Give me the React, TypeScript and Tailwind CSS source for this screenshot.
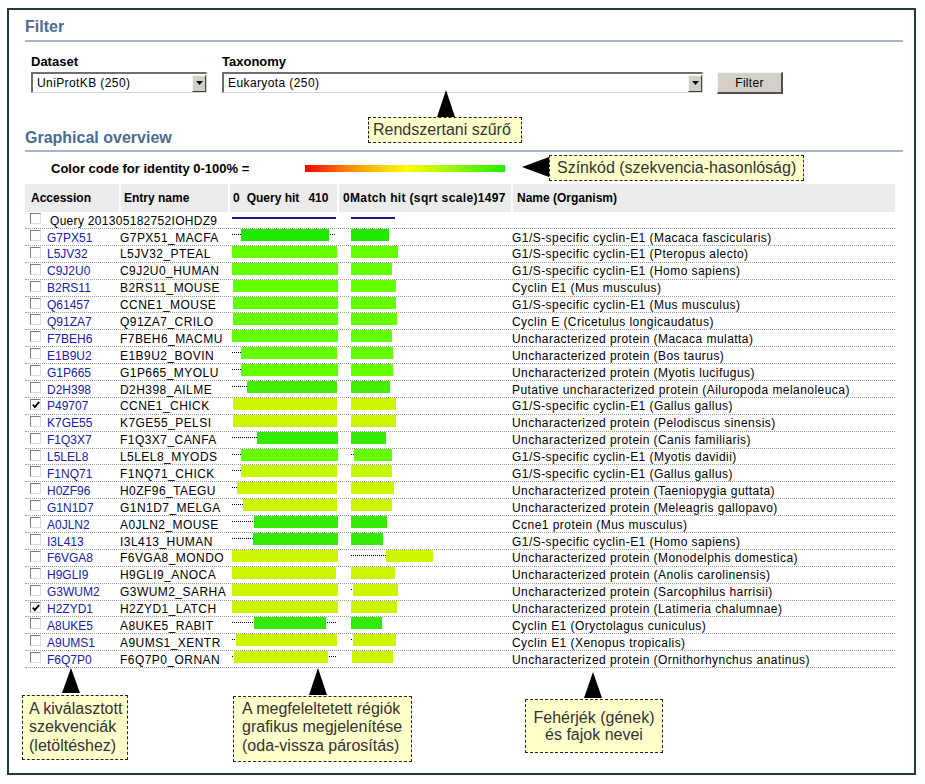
import React from 'react';

type Row = {
  acc: string;
  entry: string;
  name: string;
  q: number[]; // [barStart, barEnd, trailEnd?] in page px
  m: number[]; // [barStart, barEnd]
  color: string;
  checked?: boolean;
};

const GR = '#22e800';
const GR2 = '#33ea00';
const LI = '#66ff00';
const YE = '#ccf600';

const rows: Row[] = [
  { acc: 'G7PX51', entry: 'G7PX51_MACFA', name: 'G1/S-specific cyclin-E1 (Macaca fascicularis)', q: [241, 329, 336], m: [351, 389], color: GR },
  { acc: 'L5JV32', entry: 'L5JV32_PTEAL', name: 'G1/S-specific cyclin-E1 (Pteropus alecto)', q: [232, 337], m: [351, 398], color: LI },
  { acc: 'C9J2U0', entry: 'C9J2U0_HUMAN', name: 'G1/S-specific cyclin-E1 (Homo sapiens)', q: [232, 338], m: [351, 392], color: LI },
  { acc: 'B2RS11', entry: 'B2RS11_MOUSE', name: 'Cyclin E1 (Mus musculus)', q: [233, 338], m: [351, 396], color: LI },
  { acc: 'Q61457', entry: 'CCNE1_MOUSE', name: 'G1/S-specific cyclin-E1 (Mus musculus)', q: [233, 338], m: [351, 396], color: LI },
  { acc: 'Q91ZA7', entry: 'Q91ZA7_CRILO', name: 'Cyclin E (Cricetulus longicaudatus)', q: [233, 338], m: [351, 397], color: LI },
  { acc: 'F7BEH6', entry: 'F7BEH6_MACMU', name: 'Uncharacterized protein (Macaca mulatta)', q: [232, 338], m: [351, 392], color: LI },
  { acc: 'E1B9U2', entry: 'E1B9U2_BOVIN', name: 'Uncharacterized protein (Bos taurus)', q: [241, 337], m: [351, 393], color: LI },
  { acc: 'G1P665', entry: 'G1P665_MYOLU', name: 'Uncharacterized protein (Myotis lucifugus)', q: [241, 338], m: [351, 393], color: LI },
  { acc: 'D2H398', entry: 'D2H398_AILME', name: 'Putative uncharacterized protein (Ailuropoda melanoleuca)', q: [247, 337], m: [351, 390], color: '#44ec00' },
  { acc: 'P49707', entry: 'CCNE1_CHICK', name: 'G1/S-specific cyclin-E1 (Gallus gallus)', q: [233, 337], m: [351, 396], color: YE, checked: true },
  { acc: 'K7GE55', entry: 'K7GE55_PELSI', name: 'Uncharacterized protein (Pelodiscus sinensis)', q: [233, 337], m: [351, 396], color: YE },
  { acc: 'F1Q3X7', entry: 'F1Q3X7_CANFA', name: 'Uncharacterized protein (Canis familiaris)', q: [257, 338], m: [351, 386], color: GR2 },
  { acc: 'L5LEL8', entry: 'L5LEL8_MYODS', name: 'G1/S-specific cyclin-E1 (Myotis davidii)', q: [241, 338], m: [354, 392], color: LI },
  { acc: 'F1NQ71', entry: 'F1NQ71_CHICK', name: 'G1/S-specific cyclin-E1 (Gallus gallus)', q: [241, 337], m: [351, 392], color: '#c4f800' },
  { acc: 'H0ZF96', entry: 'H0ZF96_TAEGU', name: 'Uncharacterized protein (Taeniopygia guttata)', q: [237, 337], m: [351, 394], color: YE },
  { acc: 'G1N1D7', entry: 'G1N1D7_MELGA', name: 'Uncharacterized protein (Meleagris gallopavo)', q: [243, 337], m: [351, 392], color: YE },
  { acc: 'A0JLN2', entry: 'A0JLN2_MOUSE', name: 'Ccne1 protein (Mus musculus)', q: [254, 338], m: [351, 387], color: GR2 },
  { acc: 'I3L413', entry: 'I3L413_HUMAN', name: 'G1/S-specific cyclin-E1 (Homo sapiens)', q: [253, 338], m: [351, 383], color: GR2 },
  { acc: 'F6VGA8', entry: 'F6VGA8_MONDO', name: 'Uncharacterized protein (Monodelphis domestica)', q: [232, 338], m: [386, 433], color: YE },
  { acc: 'H9GLI9', entry: 'H9GLI9_ANOCA', name: 'Uncharacterized protein (Anolis carolinensis)', q: [232, 336], m: [351, 395], color: YE },
  { acc: 'G3WUM2', entry: 'G3WUM2_SARHA', name: 'Uncharacterized protein (Sarcophilus harrisii)', q: [232, 338], m: [353, 398], color: YE },
  { acc: 'H2ZYD1', entry: 'H2ZYD1_LATCH', name: 'Uncharacterized protein (Latimeria chalumnae)', q: [232, 338], m: [351, 397], color: YE, checked: true },
  { acc: 'A8UKE5', entry: 'A8UKE5_RABIT', name: 'Cyclin E1 (Oryctolagus cuniculus)', q: [254, 326, 336], m: [351, 382], color: GR2 },
  { acc: 'A9UMS1', entry: 'A9UMS1_XENTR', name: 'Cyclin E1 (Xenopus tropicalis)', q: [236, 337], m: [353, 396], color: YE },
  { acc: 'F6Q7P0', entry: 'F6Q7P0_ORNAN', name: 'Uncharacterized protein (Ornithorhynchus anatinus)', q: [234, 328, 336], m: [352, 393], color: YE },
];

// columns of the body grid start at page x: 25, 120, 230, 339, 512
const Q0 = 230;
const M0 = 339;

function CheckBox({ checked }: { checked?: boolean }) {
  return (
    <span className="relative mt-[1px] inline-block h-[11px] w-[11px] shrink-0 border border-t-[#7c7c7c] border-l-[#7c7c7c] border-r-[#dcdcdc] border-b-[#dcdcdc] bg-white">
      {checked && (
        <svg className="absolute left-[1px] top-[1px]" width="8" height="8" viewBox="0 0 8 8">
          <path d="M0.8 3.6 L2.8 6 L7.2 0.8" fill="none" stroke="#000" strokeWidth="1.8" />
        </svg>
      )}
    </span>
  );
}

function Dots({ x1, x2, y = 5.5 }: { x1: number; x2: number; y?: number }) {
  if (x2 - x1 < 1) return null;
  return <line x1={x1} x2={x2} y1={y} y2={y} stroke="#000" strokeWidth="1" strokeDasharray="1 1" />;
}

function QueryBar({ q, color }: { q: number[]; color: string }) {
  const [s, e, t] = q;
  return (
    <svg width="109" height="14" className="block">
      {s > 233 && <Dots x1={232 - Q0} x2={s - Q0} />}
      <rect x={s - Q0} y={0} width={e - s} height={12} fill={color} />
      {t && <Dots x1={e - Q0 + 1} x2={t - Q0} />}
    </svg>
  );
}

function MatchBar({ m, color }: { m: number[]; color: string }) {
  const [s, e] = m;
  return (
    <svg width="173" height="14" className="block">
      {s > 352 && <Dots x1={351 - M0} x2={s - M0} />}
      <rect x={s - M0} y={0} width={e - s} height={12} fill={color} />
    </svg>
  );
}

function Select({ text }: { text: string }) {
  return (
    <div className="mt-[3px] flex h-[21px] items-center border-t-2 border-l-2 border-r border-b border-t-[#6f6f6f] border-l-[#6f6f6f] border-r-[#d6d6d6] border-b-[#d6d6d6] bg-white">
      <span className="flex-1 pl-[4px] text-[12px] leading-[14px] tracking-[0.4px]">{text}</span>
      <span className="flex h-[17px] w-[14px] items-center justify-center border border-t-[#f4f4f4] border-l-[#f4f4f4] border-r-[#404040] border-b-[#404040] bg-[#d4d0c8]">
        <svg width="7" height="4" viewBox="0 0 7 4">
          <polygon points="0,0 7,0 3.5,4" fill="#000" />
        </svg>
      </span>
    </div>
  );
}

export default function App() {
  return (
    <div className="min-h-[784px] bg-white pl-[7px] pt-[8px] font-['Liberation_Sans',Arial,sans-serif] text-black">
      <div className="relative h-[767px] w-[909px] border-2 border-[#203c3c] pl-[16px] pr-[11px] pt-[7px]">
        {/* Filter section */}
        <h2 className="border-b-2 border-[#a7b6c6] pb-[4px] text-[16px] font-bold leading-[19px] text-[#4b6b95]">Filter</h2>

        <div className="ml-[6px] mt-[12px] flex items-start">
          <div className="w-[176px]">
            <div className="text-[13px] font-bold leading-[15px]">Dataset</div>
            <Select text="UniProtKB (250)" />
          </div>
          <div className="ml-[15px] w-[481px]">
            <div className="text-[13px] font-bold leading-[15px]">Taxonomy</div>
            <Select text="Eukaryota (250)" />
          </div>
          <button className="ml-[14px] mt-[18px] h-[22px] w-[66px] border border-t-[#f4f4f4] border-l-[#f4f4f4] border-r-2 border-b-2 border-r-[#505050] border-b-[#505050] bg-[#d4d0c8] text-[12px] leading-[14px] tracking-[0.3px]">
            Filter
          </button>
        </div>

        {/* Graphical overview */}
        <h2 className="mt-[34px] border-b-2 border-[#a7b6c6] pb-[3px] text-[16px] font-bold leading-[19px] text-[#4b6b95]">
          Graphical overview
        </h2>

        <div className="mt-[6px] flex h-[20px] items-center">
          <span className="ml-[26px] w-[254px] whitespace-nowrap text-[13px] font-bold leading-[15px]">Color code for identity 0-100% =</span>
          <span className="h-[7px] w-[200px] bg-[linear-gradient(to_right,#ff0000,#ff9900_25%,#ffff00_51%,#22ee00)]" />
        </div>

        {/* Table */}
        <div className="mt-[6px] w-[870px]">
          <div className="grid h-[28px] grid-cols-[94px_107px_107px_172px_382px] gap-x-[2px] bg-white text-[12px] font-bold leading-[14px]">
            <div className="flex items-center bg-[#ececec] pl-[6px]">Accession</div>
            <div className="flex items-center bg-[#ececec] pl-[3px]">Entry name</div>
            <div className="flex items-center whitespace-nowrap bg-[#ececec] pl-[3px]">
              <span>0</span>
              <span className="ml-[7px]">Query hit</span>
              <span className="ml-[9px]">410</span>
            </div>
            <div className="flex items-center whitespace-nowrap bg-[#ececec] pl-[4px] tracking-[0.35px]">0Match hit (sqrt scale)1497</div>
            <div className="flex items-center bg-[#ececec] pl-[4px]">Name (Organism)</div>
          </div>

          {/* query row */}
          <div className="grid h-[17px] grid-cols-[95px_110px_109px_173px_383px] border-b border-dotted border-[#9c9c9c] text-[12px] leading-[14px]">
            <div className="col-span-2 flex items-start pl-[5px]">
              <CheckBox />
              <span className="ml-[9px] mt-[1.5px] whitespace-nowrap tracking-[0.3px]">Query 201305182752IOHDZ9</span>
            </div>
            <div>
              <svg width="109" height="14" className="block">
                <rect x={232 - Q0} y={5} width={104} height={2} fill="#1a1a8c" />
              </svg>
            </div>
            <div>
              <svg width="173" height="14" className="block">
                <rect x={351 - M0} y={5} width={44} height={2} fill="#1a1a8c" />
              </svg>
            </div>
            <div />
          </div>

          {rows.map((r) => (
            <div
              key={r.acc}
              className="grid h-[16.9px] grid-cols-[95px_110px_109px_173px_383px] border-b border-dotted border-[#9c9c9c] text-[12px] leading-[14px]"
            >
              <div className="flex items-start pl-[5px]">
                <CheckBox checked={r.checked} />
                <a className="ml-[6px] mt-[1.5px] text-[#2020a6]">{r.acc}</a>
              </div>
              <div className="whitespace-nowrap pt-[1.5px] tracking-[0.45px]">{r.entry}</div>
              <div>
                <QueryBar q={r.q} color={r.color} />
              </div>
              <div>
                <MatchBar m={r.m} color={r.color} />
              </div>
              <div className="whitespace-nowrap pt-[1.5px] tracking-[0.45px]">{r.name}</div>
            </div>
          ))}
        </div>

        {/* annotation callouts below the table */}
        <div className="flex items-start text-[16px] text-[#333333]">
          <div className="ml-[-3px] w-[106px]">
            <svg className="ml-[40px] block" width="18" height="25" viewBox="0 0 18 25">
              <polygon points="9,0 18,25 0,25" fill="#000" />
            </svg>
            <div className="mt-[2px] h-[65px] border border-dashed border-[#222] bg-[#ffffcc] pl-[6px] pt-[4px] leading-[18.3px]">
              A kiválasztott
              <br />
              szekvenciák
              <br />
              (letöltéshez)
            </div>
          </div>
          <div className="ml-[105px] w-[179px]">
            <svg className="ml-[76px] block" width="18" height="27" viewBox="0 0 18 27">
              <polygon points="9,0 18,27 0,27" fill="#000" />
            </svg>
            <div className="mt-[1px] h-[66px] border border-dashed border-[#222] bg-[#ffffcc] pl-[8px] pt-[3px] leading-[18.3px]">
              A megfeleltetett régiók
              <br />
              grafikus megjelenítése
              <br />
              (oda-vissza párosítás)
            </div>
          </div>
          <div className="ml-[113px] mt-[4px] w-[138px]">
            <svg className="ml-[59px] block" width="18" height="26" viewBox="0 0 18 26">
              <polygon points="9,0 18,26 0,26" fill="#000" />
            </svg>
            <div className="mt-[1px] h-[54px] border border-dashed border-[#222] bg-[#ffffcc] pt-[9px] text-center leading-[17px]">
              Fehérjék (gének)
              <br />
              és fajok nevei
            </div>
          </div>
        </div>

        {/* annotation callouts laid over the filter area */}
        <svg className="absolute left-[428px] top-[80px]" width="18" height="27" viewBox="0 0 18 27">
          <polygon points="9,0 18,27 0,27" fill="#000" />
        </svg>
        <div className="absolute left-[359px] top-[107px] flex h-[26px] w-[154px] items-center border border-dashed border-[#222] bg-[#ffffcc] pl-[4px] text-[16px] leading-[18px] text-[#333333]">
          Rendszertani szűrő
        </div>

        <svg className="absolute left-[513px] top-[147px]" width="27" height="20" viewBox="0 0 27 20">
          <polygon points="0,10 27,0 27,20" fill="#000" />
        </svg>
        <div className="absolute left-[540px] top-[145px] flex h-[26px] w-[255px] items-center border border-dashed border-[#222] bg-[#ffffcc] pl-[7px] text-[16px] leading-[18px] text-[#333333]">
          Színkód (szekvencia-hasonlóság)
        </div>
      </div>
    </div>
  );
}
